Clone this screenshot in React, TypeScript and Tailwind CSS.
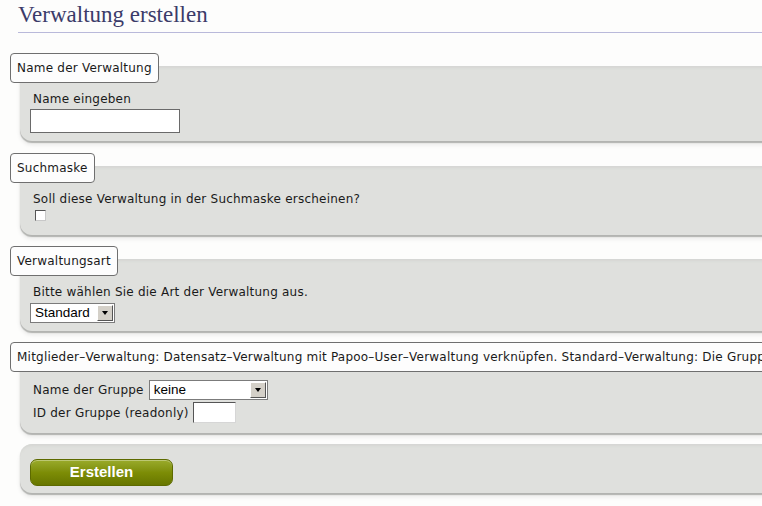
import React from "react";

const sans = { fontFamily: '"DejaVu Sans", Verdana, sans-serif', letterSpacing: "0.22px" };

function Legend({ children }: { children: React.ReactNode }) {
  return (
    <div className="flex">
      <div className="relative z-10 flex h-[30px] shrink-0 items-center whitespace-nowrap rounded-[4px] border border-[#6f6f6f] bg-[#fdfdfd] px-[6px] text-[12px] leading-[16px] text-[#1a1a1a]">
        {children}
      </div>
    </div>
  );
}

function Panel({ children, className }: { children: React.ReactNode; className?: string }) {
  return (
    <div
      className={
        "ml-[10px] mr-[-20px] rounded-l-[12px] bg-[#dfe0dd] pl-[10px] shadow-[inset_0_4px_3px_-2px_#d5d6d3,0_2px_1px_#b3b4b1,0_4px_4px_rgba(0,0,0,0.08)] " +
        (className ?? "")
      }
    >
      {children}
    </div>
  );
}

function FakeSelect({ value, width }: { value: string; width: string }) {
  return (
    <div className={"flex h-[20px] items-center border border-[#7b7b7b] bg-white pl-[4px] pr-[1px] " + width}>
      <span
        className="flex-1 text-[13.5px] leading-[16px] tracking-normal text-black"
        style={{ fontFamily: '"Liberation Sans", Arial, sans-serif' }}
      >
        {value}
      </span>
      <div className="flex h-[16px] w-[16px] items-center justify-center border border-t-white border-l-white border-r-[#555] border-b-[#555] bg-[#d4d0c8]">
        <div className="h-0 w-0 border-x-[3.5px] border-t-[4px] border-x-transparent border-t-black" />
      </div>
    </div>
  );
}

export default function App() {
  return (
    <div className="h-[506px] w-[762px] overflow-hidden bg-[#fdfdfc]" style={sans}>
      <div className="ml-[18px] border-b border-[#b9b9da] pb-[3px] pt-[1px]">
        <h1
          className="text-[23px] leading-[28px] tracking-normal text-[#3b3b69]"
          style={{ fontFamily: '"Liberation Serif", "Times New Roman", serif' }}
        >
          Verwaltung erstellen
        </h1>
      </div>

      <div className="mt-[20px] pl-[10px]">
        <Legend>Name der Verwaltung</Legend>
        <Panel className="-mt-[17px] pb-[8px] pt-[25px]">
          <div className="pl-[3px] text-[12px] leading-[16px] text-[#1a1a1a]">Name eingeben</div>
          <div className="mt-[2px] h-[24px] w-[150px] border border-[#6a6a6a] bg-white" />
        </Panel>
      </div>

      <div className="mt-[12px] pl-[10px]">
        <Legend>Suchmaske</Legend>
        <Panel className="-mt-[17px] pb-[12px] pt-[25px]">
          <div className="pl-[3px] text-[12px] leading-[16px] text-[#1a1a1a]">
            Soll diese Verwaltung in der Suchmaske erscheinen?
          </div>
          <div className="h-[16px] pt-[3px]">
            <div className="ml-[5px] h-[11px] w-[11px] border border-t-[#555] border-l-[#555] border-r-[#c8c8c8] border-b-[#c8c8c8] bg-white" />
          </div>
        </Panel>
      </div>

      <div className="mt-[11px] pl-[10px]">
        <Legend>Verwaltungsart</Legend>
        <Panel className="-mt-[17px] pb-[8px] pt-[25px]">
          <div className="pl-[3px] text-[12px] leading-[16px] text-[#1a1a1a]">
            Bitte wählen Sie die Art der Verwaltung aus.
          </div>
          <div className="mt-[3px]">
            <FakeSelect value="Standard" width="w-[85px]" />
          </div>
        </Panel>
      </div>

      <div className="mt-[11px] pl-[10px]">
        <Legend>
          Mitglieder–Verwaltung: Datensatz–Verwaltung mit Papoo–User–Verwaltung verknüpfen. Standard–Verwaltung: Die Gruppe wird nicht verknüpft.
        </Legend>
        <Panel className="-mt-[17px] pb-[10px] pt-[25px]">
          <div className="flex items-center text-[12px] leading-[16px] text-[#1a1a1a]">
            <span className="pl-[3px] pr-[5px]">Name der Gruppe</span>
            <FakeSelect value="keine" width="w-[119px]" />
          </div>
          <div className="mt-[2px] flex items-center text-[12px] leading-[16px] text-[#1a1a1a]">
            <span className="pl-[3px] pr-[4px]">ID der Gruppe (readonly)</span>
            <div className="h-[21px] w-[43px] border border-t-[#555] border-l-[#555] border-r-[#d6d6d6] border-b-[#d6d6d6] bg-white" />
          </div>
        </Panel>
      </div>

      <div className="mt-[11px] pl-[10px]">
        <Panel className="pb-[7px] pt-[15px]">
          <button
            className="flex h-[27px] w-[143px] items-center justify-center rounded-[7px] border border-[#5d6a00] bg-gradient-to-b from-[#9aab2a] via-[#7d8d06] to-[#677600] text-[15px] font-bold tracking-normal text-white shadow-[inset_0_1px_0_rgba(255,255,255,0.35)]"
            style={{ fontFamily: '"Liberation Sans", Arial, sans-serif' }}
          >
            Erstellen
          </button>
        </Panel>
      </div>
    </div>
  );
}
